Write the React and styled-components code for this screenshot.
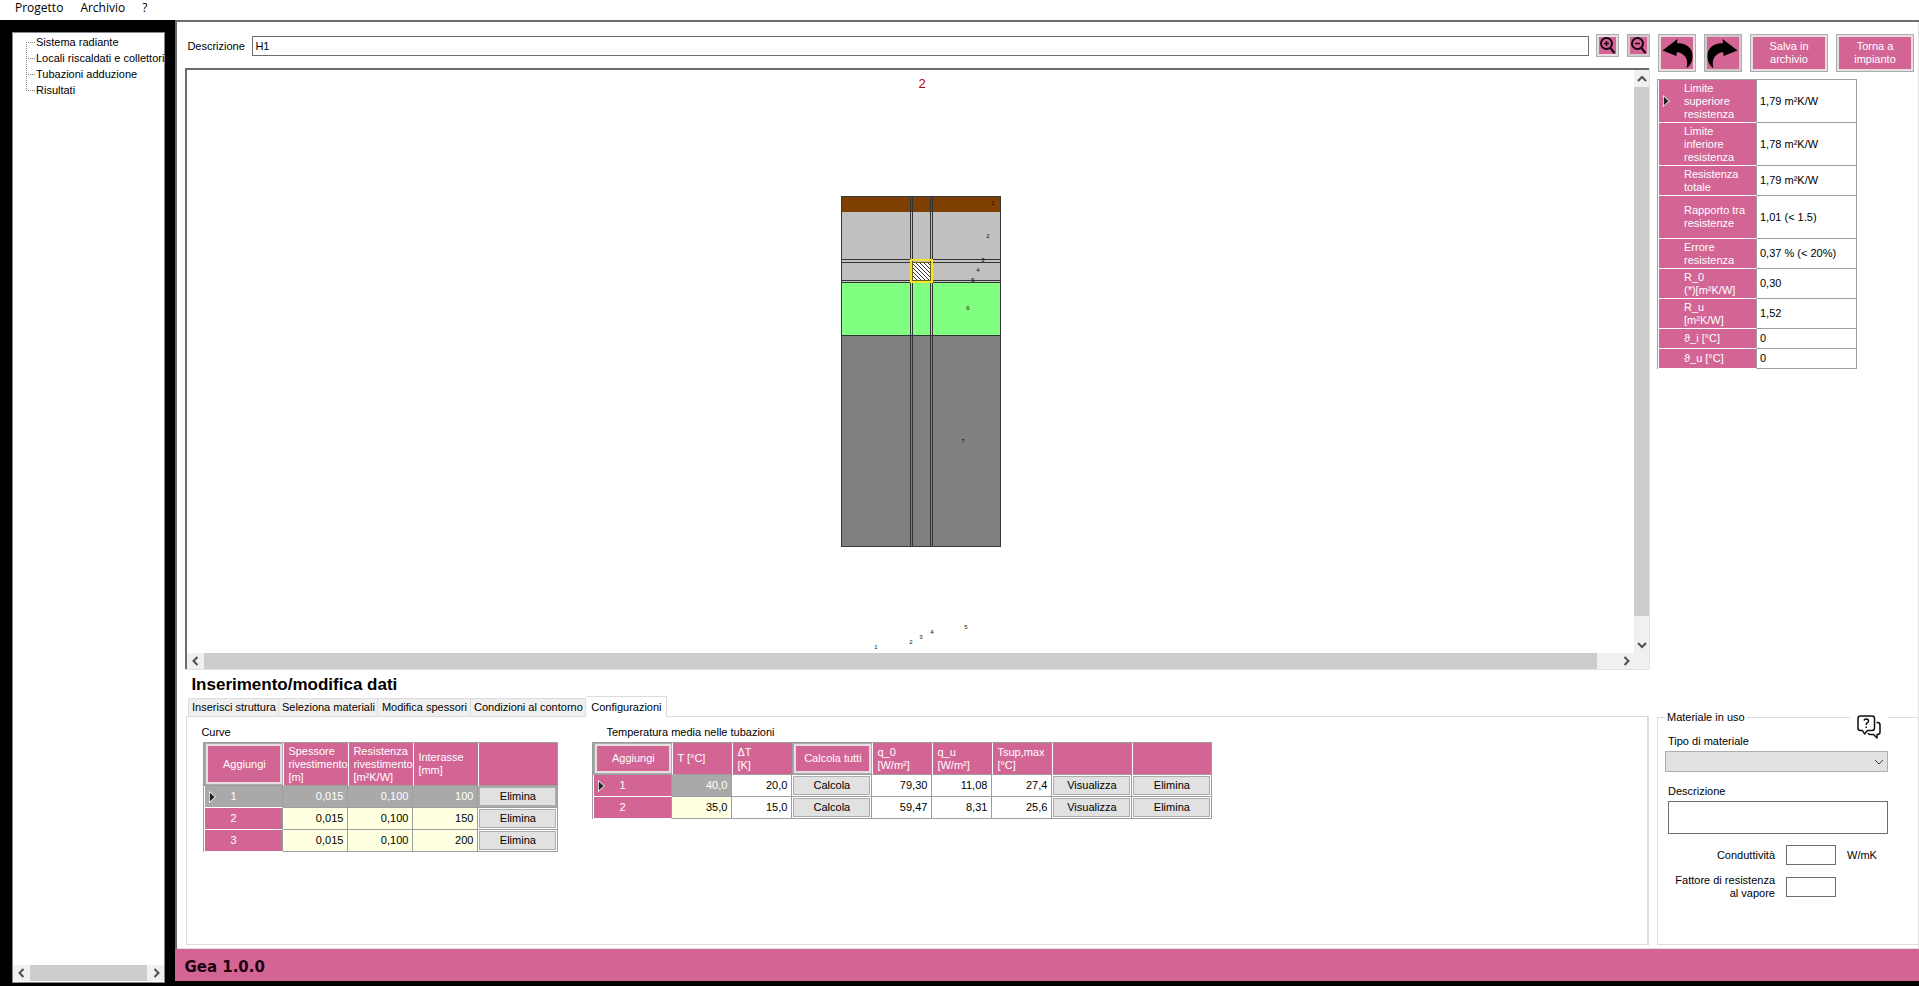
import React from "react";
import styled, { createGlobalStyle } from "styled-components";

const PINK = "#d26594";
const GRID = "#9c9fa0";
const SOFT = "#dcdcdc";

const GlobalStyle = createGlobalStyle`
  * { box-sizing: border-box; }
  body { margin: 0; }
  body, button, input, select, textarea {
    font-family: "Liberation Sans", Arial, sans-serif;
    font-size: 11px;
    line-height: 13px;
    color: #000;
  }
`;

const Page = styled.div`
  display: flex;
  flex-direction: column;
  min-height: 100vh;
  background: #fff;
`;

const MenuBar = styled.nav`
  display: flex;
  gap: 17px;
  height: 20px;
  padding-left: 15px;
  a {
    font-family: "Open Sans", "Noto Sans", sans-serif;
    font-size: 12px;
    line-height: 16px;
    color: #000;
    text-decoration: none;
  }
`;

const Body = styled.div`
  display: flex;
  flex: 1;
  background: #000;
`;

const Sidebar = styled.aside`
  display: flex;
  flex: 0 0 174px;
  padding: 12px 10px 3px 12px;
`;

const TreePanel = styled.div`
  display: flex;
  flex: 1;
  flex-direction: column;
  justify-content: space-between;
  min-width: 0;
  padding-bottom: 1px;
  background: #fff;
  border: 1px solid #828790;
`;

const Tree = styled.ul`
  margin: 1px 0 0 13px;
  padding: 0;
  overflow: hidden;
  list-style: none;
`;

const TreeItem = styled.li`
  display: flex;
  align-items: center;
  height: 16px;
  white-space: nowrap;
  background:
    repeating-linear-gradient(#808080 0 1px, transparent 1px 2px) 0 ${(p) => (p.$first ? "8px" : "0")} / 1px ${(p) => (p.$last ? "8px" : "100%")} no-repeat,
    repeating-linear-gradient(90deg, #808080 0 1px, transparent 1px 2px) 0 8px / 9px 1px no-repeat;
  a {
    padding-left: 10px;
    color: #000;
    text-decoration: none;
  }
`;

const HScroll = styled.div`
  display: flex;
  align-items: center;
  height: 16px;
  background: #f0f0f0;
`;

const VScroll = styled.div`
  display: flex;
  flex-direction: column;
  align-items: center;
  width: 15px;
  background: #f0f0f0;
`;

const ScrollArrow = styled.span`
  display: flex;
  flex: 0 0 17px;
  align-items: center;
  justify-content: center;
`;

const Thumb = styled.span`
  flex: 1;
  align-self: stretch;
  background: #cdcdcd;
`;

const Track = styled.span`
  flex: 0 0 ${(p) => p.$size}px;
`;

const Main = styled.main`
  display: flex;
  flex: 1;
  flex-direction: column;
  min-width: 0;
  padding-bottom: 5px;
`;

const Workspace = styled.div`
  display: grid;
  flex: 1;
  grid-template-columns: minmax(0, 1fr) 262px;
  grid-template-rows: 1fr auto;
  column-gap: 8px;
  padding: 12px 0 4px 8px;
  background: #fff;
  border: solid #6b6b6b;
  border-width: 2px 0 0 2px;
  box-shadow: inset -1px 0 #e3e3e3, inset 0 -1px #e3e3e3;
`;

const Editor = styled.section`
  display: flex;
  flex-direction: column;
`;

const DescriptionRow = styled.div`
  display: flex;
  align-items: center;
  height: 24px;
  margin-bottom: 10px;
  label {
    flex: 0 0 67px;
    padding-left: 2px;
  }
`;

const TextBox = styled.input`
  flex: ${(p) => (p.$wide ? "1" : "0 0 50px")};
  min-width: 0;
  height: 20px;
  padding: 0 2px;
  background: #fff;
  border: 1px solid #6e6e6e;
  border-radius: 0;
`;

const PinkButton = styled.button`
  display: flex;
  align-items: center;
  justify-content: center;
  width: ${(p) => p.$w || 38}px;
  height: ${(p) => p.$h || 38}px;
  padding: 0;
  color: #fff;
  background: ${PINK};
  border: 1px solid #adadad;
  border-radius: 0;
  box-shadow: inset 0 0 0 2px ${(p) => (p.$dim ? "#cfcbcd" : "#e6dfe2")};
`;

const ZoomButtons = styled.div`
  display: flex;
  gap: 8px;
  padding: 0 0 1px 7px;
  margin-right: -1px;
`;

const Canvas = styled.div`
  display: grid;
  flex: 1;
  grid-template-columns: minmax(0, 1fr) 15px;
  grid-template-rows: 1fr 16px;
  border: solid #6b6b6b;
  border-width: 2px 0 0 2px;
  box-shadow: 1px 0 #e3e3e3, 0 1px #e3e3e3;
`;

const Drawing = styled.div`
  display: flex;
  justify-content: center;
  padding: 2px 0 0 20px;
  svg text {
    font-size: 6px;
    text-anchor: middle;
    fill: #111;
  }
  svg .section {
    font-size: 13px;
    fill: #c00000;
  }
`;

const SidePanel = styled.section`
  display: flex;
  flex-direction: column;
  align-items: flex-start;
  gap: 7px;
`;

const ActionRow = styled.div`
  display: flex;
  gap: 8px;
  padding-left: 1px;
`;

const Table = styled.table`
  table-layout: fixed;
  border-spacing: 0;
  border: 1px solid ${GRID};
  border-width: 1px 0 0 1px;
`;

const Row = styled.tr`
  height: ${(p) => p.$h || 22}px;
`;

const HeadCell = styled.th`
  width: ${(p) => p.$w}px;
  padding: ${(p) => (p.$button ? "0" : "0 0 0 4px")};
  text-align: left;
  font-weight: normal;
  color: #fff;
  background: ${PINK};
  border-left: 1px solid ${(p) => (p.$button ? GRID : "#fff")};
  border-bottom: 1px solid ${GRID};
  &:last-child { border-right: 1px solid ${GRID}; }
`;

const RowHead = styled.th`
  position: relative;
  width: ${(p) => (p.$wide ? "99px" : "auto")};
  padding: 0 0 0 25px;
  text-align: left;
  font-weight: normal;
  color: #fff;
  background: ${(p) => (p.$selected ? "#a9a9a9" : PINK)};
  border-left: 1px solid #fff;
  border-bottom: 1px solid #fff;
  border-right: 1px solid ${GRID};
`;

const Marker = styled.svg`
  position: absolute;
  left: 3px;
  top: calc(50% - 6px);
`;

const Cell = styled.td`
  width: ${(p) => (p.$left ? "100px" : "auto")};
  padding: ${(p) => (p.$button ? "1px" : p.$left ? "0 3px" : "0 4px")};
  text-align: ${(p) => (p.$left ? "left" : "right")};
  color: ${(p) => (p.$selected ? "#fff" : "#000")};
  background: ${(p) => (p.$selected ? "#a9a9a9" : p.$edit ? "#ffffe1" : "#fff")};
  border: solid ${GRID};
  border-width: 0 1px 1px 0;
`;

const GridButton = styled.button`
  display: block;
  width: 100%;
  height: 19px;
  padding: 0;
  background: #e1e1e1;
  border: 1px solid #adadad;
  border-radius: 0;
`;

const Lower = styled.section`
  padding-left: 1px;
`;

const Title = styled.h1`
  height: 27px;
  margin: 0;
  padding-left: 5px;
  font-size: 17px;
  line-height: 32px;
`;

const Tabs = styled.div`
  display: flex;
  align-items: flex-end;
  height: 20px;
  padding-left: 2px;
`;

const Tab = styled.button`
  position: relative;
  width: ${(p) => p.$w}px;
  height: ${(p) => (p.$active ? 21 : 18)}px;
  margin-bottom: ${(p) => (p.$active ? -1 : 0)}px;
  padding: 0;
  white-space: nowrap;
  background: ${(p) => (p.$active ? "#fff" : "#f0f0f0")};
  border: 1px solid ${SOFT};
  border-width: 1px 1px 0 0;
  border-radius: 0;
  &:first-child { border-left-width: 1px; }
`;

const TabPanel = styled.div`
  display: flex;
  align-items: flex-start;
  gap: 32px;
  height: 229px;
  padding: 9px 14px;
  border: 1px solid ${SOFT};
  border-right-width: 2px;
`;

const GridBlock = styled.div`
  h2 {
    margin: 0 0 3px;
    padding-left: ${(p) => p.$indent || 0}px;
    font-size: 11px;
    font-weight: normal;
  }
  table {
    margin-left: 2px;
  }
`;

const MaterialArea = styled.section`
  position: relative;
  display: flex;
  padding-top: 41px;
`;

const MaterialBox = styled.fieldset`
  display: flex;
  flex: 1;
  flex-direction: column;
  height: 235px;
  min-width: 0;
  margin: 0;
  padding: 0 30px 0 7px;
  border: 1px solid ${SOFT};
  legend {
    padding: 1px 2px 0;
  }
`;

const FieldLabel = styled.label`
  padding-left: 3px;
  margin: ${(p) => p.$top}px 0 3px;
`;

const SelectWrap = styled.div`
  position: relative;
  select {
    display: block;
    width: 100%;
    height: 21px;
    appearance: none;
    background: #e1e1e1;
    border: 1px solid #adadad;
    border-radius: 0;
  }
  svg {
    position: absolute;
    right: 4px;
    top: 6px;
    pointer-events: none;
  }
`;

const NoteBox = styled.textarea`
  height: 33px;
  margin: 0 0 11px 3px;
  resize: none;
  border: 1px solid #6e6e6e;
  border-radius: 0;
`;

const PropertyRow = styled.div`
  display: flex;
  align-items: center;
  gap: 11px;
  margin-bottom: 9px;
  label {
    width: 110px;
    text-align: right;
  }
`;

const HelpBadge = styled.button`
  position: absolute;
  top: 46px;
  right: 31px;
  width: 38px;
  height: 26px;
  padding: 0;
  background: #fff;
  border: 0;
`;

const Footer = styled.footer`
  height: 32px;
  padding-left: 9px;
  font-family: "DejaVu Sans", Verdana, sans-serif;
  font-size: 15px;
  font-weight: bold;
  line-height: 36px;
  color: #1c0010;
  background: ${PINK};
`;

const CHEVRONS = {
  left: "M6.5 1 L2.5 5 L6.5 9",
  right: "M3.5 1 L7.5 5 L3.5 9",
  up: "M1 7 L5 3 L9 7",
  down: "M1 3 L5 7 L9 3",
};

function Chevron({ dir, width = 2, color = "#505050" }) {
  return (
    <svg width="10" height="10" viewBox="0 0 10 10" aria-hidden="true">
      <path d={CHEVRONS[dir]} fill="none" stroke={color} strokeWidth={width} />
    </svg>
  );
}

function Magnifier({ plus }) {
  return (
    <svg width="17" height="17" viewBox="0 0 17 17" fill="none" stroke="#1a0010" strokeWidth="2" aria-hidden="true">
      <circle cx="7.5" cy="6.5" r="5.5" />
      <path d="M11 10.5 L15.5 16" />
      <path d={plus ? "M5 6.5 H10 M7.5 4 V9" : "M5 6.5 H10"} strokeWidth="1.5" />
    </svg>
  );
}

function CurvedArrow({ flip }) {
  return (
    <svg width="36" height="36" viewBox="0 0 36 36" aria-hidden="true">
      <path
        transform={flip ? "translate(36 0) scale(-1 1)" : undefined}
        d="M3.5 15.5 L18.5 4 L18 8.5 C26 7.500 33.5 12.500 33.5 21 C33.5 27 31 31 27.5 33 C29.5 26 27.500 18.500 17.800 17 L17.500 21 Z"
        fill="#000"
      />
    </svg>
  );
}

function CurrentRow() {
  return (
    <Marker width="9" height="12" viewBox="0 0 9 12" aria-hidden="true">
      <path d="M1 0 L8 6 L1 12 Z" fill="#fff" />
      <path d="M2 2 L6.5 6 L2 10 Z" fill="#222" stroke="#222" strokeWidth="0.5" />
    </Marker>
  );
}

function Lines({ text }) {
  return text.split("\n").map((line, i) => (
    <React.Fragment key={i}>
      {i > 0 && <br />}
      {line}
    </React.Fragment>
  ));
}

const LAYER_LABELS = [
  [1, 152, 133], [2, 147, 166], [3, 142, 190], [4, 137, 200], [5, 132, 210], [6, 127, 238], [7, 122, 371],
  [1, 35, 577], [2, 70, 572], [3, 80, 567], [4, 91, 562], [5, 125, 557],
];

function Section() {
  return (
    <svg width="160" height="578" viewBox="0 0 160 578" role="img" aria-label="Sezione">
      <text className="section" x="81" y="16">2</text>
      <g shapeRendering="crispEdges">
        <rect y="124" width="160" height="16" fill="#7f3f00" />
        <rect y="140" width="160" height="70" fill="#c0c0c0" />
        <rect y="210" width="160" height="53" fill="#80ff80" />
        <rect y="263" width="160" height="212" fill="#808080" />
        <rect x="72" y="190" width="17" height="18" fill="#fff" />
        <path d="M72 204 l4 4 M72 200 l8 8 M72 196 l12 12 M72 192 l16 16 M74 190 l15 15 M78 190 l11 11 M82 190 l7 7 M86 190 l3 3" stroke="#333" />
        <path
          d="M69.5 124 V475 M71.5 124 V475 M89.5 124 V475 M91.5 124 V475 M0 187.5 H160 M0 190.5 H160 M0 208.5 H160 M0 210.5 H160 M0 263.5 H160"
          stroke="#333"
          fill="none"
        />
        <rect x="70" y="188" width="21" height="22" fill="none" stroke="#f0e430" strokeWidth="2" />
        <rect x="71.5" y="190.5" width="18" height="18" fill="none" stroke="#6b6410" />
        <rect x="0.5" y="124.5" width="159" height="350" fill="none" stroke="#3a3a3a" />
      </g>
      {LAYER_LABELS.map(([n, x, y], i) => (
        <text key={i} x={x} y={y}>{n}</text>
      ))}
    </svg>
  );
}

const TREE = ["Sistema radiante", "Locali riscaldati e collettori", "Tubazioni adduzione", "Risultati"];

const RESULTS = [
  ["Limite\nsuperiore\nresistenza", "1,79 m²K/W", 43],
  ["Limite\ninferiore\nresistenza", "1,78 m²K/W", 43],
  ["Resistenza\ntotale", "1,79 m²K/W", 30],
  ["Rapporto tra\nresistenze", "1,01 (< 1.5)", 43],
  ["Errore\nresistenza", "0,37 % (< 20%)", 30],
  ["R_0\n(*)[m²K/W]", "0,30", 30],
  ["R_u\n[m²K/W]", "1,52", 30],
  ["ϑ_i [°C]", "0", 20],
  ["ϑ_u [°C]", "0", 20],
];

const TABS = [
  ["Inserisci struttura", 91],
  ["Seleziona materiali", 99],
  ["Modifica spessori", 93],
  ["Condizioni al contorno", 115],
  ["Configurazioni", 81],
];

const CURVES = [["0,015", "0,100", "100"], ["0,015", "0,100", "150"], ["0,015", "0,100", "200"]];

const TEMPERATURES = [
  ["40,0", "20,0", "79,30", "11,08", "27,4"],
  ["35,0", "15,0", "59,47", "8,31", "25,6"],
];

function CurveTable() {
  return (
    <Table>
      <thead>
        <Row $h={43}>
          <HeadCell $w={79} $button><PinkButton $w={78} $h={42}>Aggiungi</PinkButton></HeadCell>
          <HeadCell $w={65}><Lines text={"Spessore\nrivestimento\n[m]"} /></HeadCell>
          <HeadCell $w={65}><Lines text={"Resistenza\nrivestimento\n[m²K/W]"} /></HeadCell>
          <HeadCell $w={65}><Lines text={"Interasse\n[mm]"} /></HeadCell>
          <HeadCell $w={80} />
        </Row>
      </thead>
      <tbody>
        {CURVES.map((values, i) => (
          <Row key={i}>
            <RowHead scope="row" $selected={i === 0}>{i === 0 && <CurrentRow />}{i + 1}</RowHead>
            {values.map((v, j) => <Cell key={j} $edit $selected={i === 0}>{v}</Cell>)}
            <Cell $button $selected={i === 0}><GridButton>Elimina</GridButton></Cell>
          </Row>
        ))}
      </tbody>
    </Table>
  );
}

function TemperatureTable() {
  return (
    <Table>
      <thead>
        <Row $h={32}>
          <HeadCell $w={79} $button><PinkButton $w={78} $h={31}>Aggiungi</PinkButton></HeadCell>
          <HeadCell $w={60}>T [°C]</HeadCell>
          <HeadCell $w={60}><Lines text={"ΔT\n[K]"} /></HeadCell>
          <HeadCell $w={80} $button><PinkButton $w={79} $h={31}>Calcola tutti</PinkButton></HeadCell>
          <HeadCell $w={60}><Lines text={"q_0\n[W/m²]"} /></HeadCell>
          <HeadCell $w={60}><Lines text={"q_u\n[W/m²]"} /></HeadCell>
          <HeadCell $w={60}><Lines text={"Tsup,max\n[°C]"} /></HeadCell>
          <HeadCell $w={80} />
          <HeadCell $w={80} />
        </Row>
      </thead>
      <tbody>
        {TEMPERATURES.map(([t, dt, q0, qu, tsup], i) => (
          <Row key={i}>
            <RowHead scope="row">{i === 0 && <CurrentRow />}{i + 1}</RowHead>
            <Cell $edit $selected={i === 0}>{t}</Cell>
            <Cell>{dt}</Cell>
            <Cell $button><GridButton>Calcola</GridButton></Cell>
            <Cell>{q0}</Cell>
            <Cell>{qu}</Cell>
            <Cell>{tsup}</Cell>
            <Cell $button><GridButton>Visualizza</GridButton></Cell>
            <Cell $button><GridButton>Elimina</GridButton></Cell>
          </Row>
        ))}
      </tbody>
    </Table>
  );
}

function Material() {
  return (
    <MaterialArea>
      <MaterialBox>
        <legend>Materiale in uso</legend>
        <FieldLabel $top={11} htmlFor="tipo">Tipo di materiale</FieldLabel>
        <SelectWrap>
          <select id="tipo" defaultValue=""><option value="" /></select>
          <Chevron dir="down" width={1} color="#404040" />
        </SelectWrap>
        <FieldLabel $top={13} htmlFor="nota">Descrizione</FieldLabel>
        <NoteBox id="nota" />
        <PropertyRow>
          <label htmlFor="cond">Conduttività</label>
          <TextBox id="cond" />
          <span>W/mK</span>
        </PropertyRow>
        <PropertyRow>
          <label htmlFor="vapore">Fattore di resistenza<br />al vapore</label>
          <TextBox id="vapore" />
        </PropertyRow>
      </MaterialBox>
      <HelpBadge aria-label="Aiuto">
        <svg width="24" height="24" viewBox="0 0 24 24" fill="none" stroke="#111" strokeWidth="1.5" strokeLinejoin="round">
          <path d="M3.5 1 H15 Q17.5 1 17.5 3.5 V13 Q17.5 15.5 15 15.5 H10.5 L7.5 19 L5.5 15.5 H3.5 Q1 15.5 1 13 V3.5 Q1 1 3.5 1 Z" />
          <path d="M7 5.5 Q7.3 4 9.2 4 Q11.5 4.1 11.5 6 Q11.5 7.3 10 8 Q9.2 8.5 9.2 10 M9.2 11.5 V13" />
          <path d="M19.5 7.5 H20.5 Q23 7.5 23 10 V17 Q23 19.5 20.5 19.5 H20 V23 L16.5 19.5 H13 Q11.5 19.5 11 18" />
        </svg>
      </HelpBadge>
    </MaterialArea>
  );
}

export default function App() {
  return (
    <Page>
      <GlobalStyle />
      <MenuBar>
        <a href="#progetto">Progetto</a>
        <a href="#archivio">Archivio</a>
        <a href="#aiuto">?</a>
      </MenuBar>
      <Body>
        <Sidebar>
          <TreePanel>
            <Tree>
              {TREE.map((name, i) => (
                <TreeItem key={name} $first={i === 0} $last={i === TREE.length - 1}>
                  <a href={`#nodo-${i + 1}`}>{name}</a>
                </TreeItem>
              ))}
            </Tree>
            <HScroll>
              <ScrollArrow><Chevron dir="left" /></ScrollArrow>
              <Thumb />
              <ScrollArrow><Chevron dir="right" /></ScrollArrow>
            </HScroll>
          </TreePanel>
        </Sidebar>
        <Main>
          <Workspace>
            <Editor>
              <DescriptionRow>
                <label htmlFor="descrizione">Descrizione</label>
                <TextBox id="descrizione" $wide defaultValue="H1" />
                <ZoomButtons>
                  <PinkButton $w={23} $h={23} aria-label="Ingrandisci"><Magnifier plus /></PinkButton>
                  <PinkButton $w={23} $h={23} $dim aria-label="Riduci"><Magnifier /></PinkButton>
                </ZoomButtons>
              </DescriptionRow>
              <Canvas>
                <Drawing><Section /></Drawing>
                <VScroll>
                  <ScrollArrow><Chevron dir="up" /></ScrollArrow>
                  <Thumb />
                  <Track $size={20} />
                  <ScrollArrow><Chevron dir="down" /></ScrollArrow>
                </VScroll>
                <HScroll>
                  <ScrollArrow><Chevron dir="left" /></ScrollArrow>
                  <Thumb />
                  <Track $size={20} />
                  <ScrollArrow><Chevron dir="right" /></ScrollArrow>
                </HScroll>
                <HScroll />
              </Canvas>
            </Editor>
            <SidePanel>
              <ActionRow>
                <PinkButton aria-label="Annulla"><CurvedArrow /></PinkButton>
                <PinkButton $dim aria-label="Ripeti"><CurvedArrow flip /></PinkButton>
                <PinkButton $w={78}>Salva in<br />archivio</PinkButton>
                <PinkButton $w={78}>Torna a<br />impianto</PinkButton>
              </ActionRow>
              <Table>
                <tbody>
                  {RESULTS.map(([name, value, h], i) => (
                    <Row key={name} $h={h}>
                      <RowHead $wide scope="row">{i === 0 && <CurrentRow />}<Lines text={name} /></RowHead>
                      <Cell $left>{value}</Cell>
                    </Row>
                  ))}
                </tbody>
              </Table>
            </SidePanel>
            <Lower>
              <Title>Inserimento/modifica dati</Title>
              <Tabs role="tablist">
                {TABS.map(([name, w], i) => (
                  <Tab key={name} role="tab" $w={w} $active={i === 4} aria-selected={i === 4}>{name}</Tab>
                ))}
              </Tabs>
              <TabPanel role="tabpanel">
                <GridBlock>
                  <h2>Curve</h2>
                  <CurveTable />
                </GridBlock>
                <GridBlock $indent={16}>
                  <h2>Temperatura media nelle tubazioni</h2>
                  <TemperatureTable />
                </GridBlock>
              </TabPanel>
            </Lower>
            <Material />
          </Workspace>
          <Footer>Gea 1.0.0</Footer>
        </Main>
      </Body>
    </Page>
  );
}
